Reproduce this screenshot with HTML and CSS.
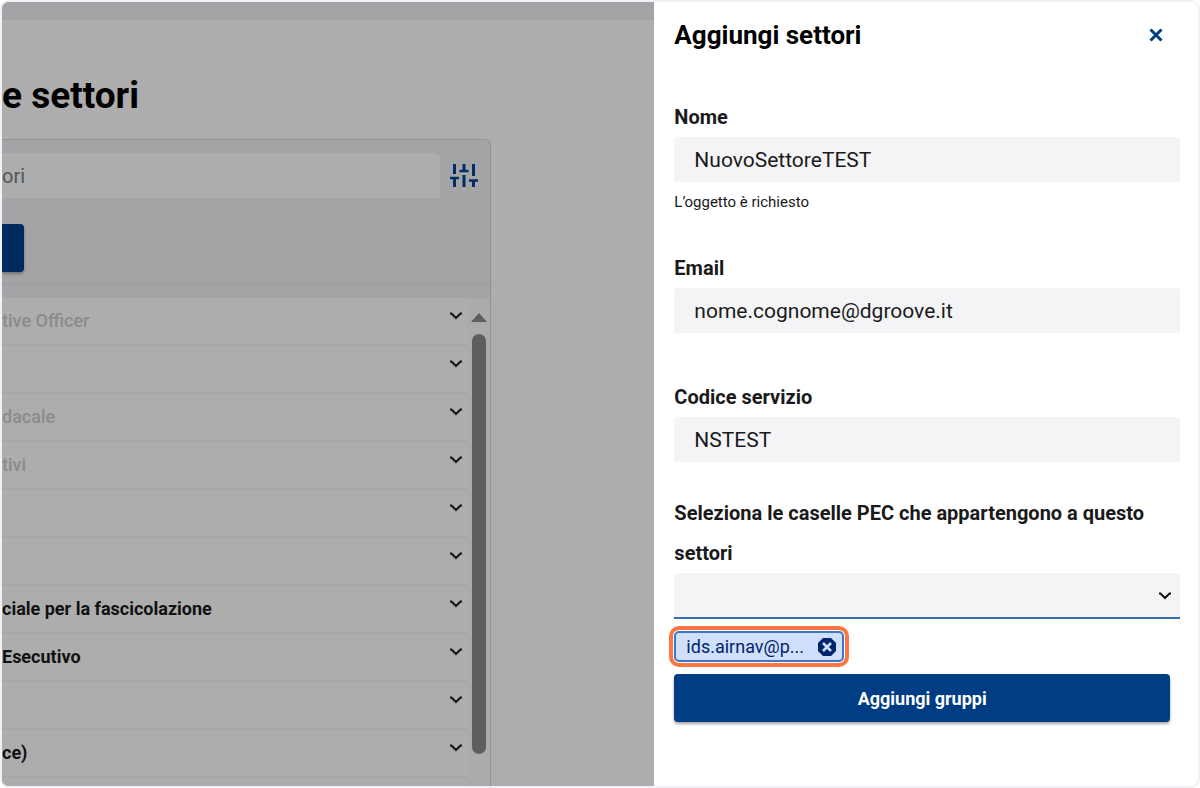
FILE: index.html
```html
<!DOCTYPE html>
<html lang="it">
<head>
  <meta charset="UTF-8" />
  <meta name="viewport" content="width=device-width, initial-scale=1" />
  <title>Gestione settori</title>
  <link rel="stylesheet" href="styles.css">
</head>
<body>

<!-- Shared icons -->
<svg class="icon-defs" aria-hidden="true">
  <symbol id="chevron" viewBox="0 0 14 8">
    <path d="M1 1.500h1.500L7 6l4.500-4.500H13" fill="none" stroke="currentColor" stroke-width="2" />
  </symbol>
</svg>

<div class="frame">
  <main class="page">
    <div class="topbar"></div>
    <h1 class="page-title">e settori</h1>

    <section class="card">
      <div class="card-head">
        <div class="search-row">
          <input class="search" type="text" placeholder="ori" aria-label="Cerca settori" />
          <button class="filter-btn" type="button" aria-label="Filtri">
            <svg width="28" height="24" viewBox="0 0 28 24" fill="none" stroke="currentColor" stroke-width="3">
              <path d="M4.500 0v10M4.500 14v9M14 0v7M14 11v12M23.500 0v12M23.500 17v6" />
              <path d="M0 14h9M9.500 7h9M19 16.500h9" stroke-width="2.500" />
            </svg>
          </button>
        </div>
        <button class="add-btn" type="button" aria-label="Aggiungi"></button>
      </div>

      <div class="list-wrap">
        <ul class="list">
          <li class="row muted"><span>tive Officer</span><svg class="chevron"><use href="#chevron" /></svg></li>
          <li class="row"><span></span><svg class="chevron"><use href="#chevron" /></svg></li>
          <li class="row muted"><span>dacale</span><svg class="chevron"><use href="#chevron" /></svg></li>
          <li class="row muted"><span>tivi</span><svg class="chevron"><use href="#chevron" /></svg></li>
          <li class="row"><span></span><svg class="chevron"><use href="#chevron" /></svg></li>
          <li class="row"><span></span><svg class="chevron"><use href="#chevron" /></svg></li>
          <li class="row"><span>ciale per la fascicolazione</span><svg class="chevron"><use href="#chevron" /></svg></li>
          <li class="row"><span>Esecutivo</span><svg class="chevron"><use href="#chevron" /></svg></li>
          <li class="row"><span></span><svg class="chevron"><use href="#chevron" /></svg></li>
          <li class="row"><span>ce)</span><svg class="chevron"><use href="#chevron" /></svg></li>
        </ul>
        <div class="scrollbar">
          <div class="scroll-arrow"></div>
          <div class="scroll-thumb"></div>
        </div>
      </div>
    </section>
  </main>

  <aside class="drawer">
    <header class="drawer-head">
      <h2 class="drawer-title">Aggiungi settori</h2>
      <button class="close-btn" type="button" aria-label="Chiudi">
        <svg width="14" height="14" viewBox="0 0 14 14" fill="none" stroke="currentColor" stroke-width="3">
          <path d="M1.500 1.500l11 11M12.500 1.500l-11 11" />
        </svg>
      </button>
    </header>

    <form class="form">
      <div class="field field-nome">
        <label for="nome">Nome</label>
        <input id="nome" class="input" type="text" value="NuovoSettoreTEST" />
        <p class="hint">L’oggetto è richiesto</p>
      </div>

      <div class="field field-email">
        <label for="email">Email</label>
        <input id="email" class="input" type="email" value="nome.cognome@dgroove.it" />
      </div>

      <div class="field field-codice">
        <label for="codice">Codice servizio</label>
        <input id="codice" class="input" type="text" value="NSTEST" />
      </div>

      <div class="field field-pec">
        <label for="pec">Seleziona le caselle PEC che appartengono a questo settori</label>
        <div class="select-wrap">
          <select id="pec" class="select"><option></option></select>
          <svg class="chevron"><use href="#chevron" /></svg>
        </div>
      </div>

      <div class="chip">
        <span>ids.airnav@p...</span>
        <button class="chip-remove" type="button" aria-label="Rimuovi">
          <svg width="18" height="18" viewBox="0 0 18 18">
            <path d="M5 0h8l5 5v8l-5 5H5l-5-5V5z" fill="currentColor" />
            <path d="M5 5l8 8M13 5l-8 8" stroke="#cfdffc" stroke-width="2.500" />
          </svg>
        </button>
      </div>

      <button class="submit-btn" type="button">Aggiungi gruppi</button>
    </form>
  </aside>
</div>

</body>
</html>
```
FILE: styles.css
```css
* {
  box-sizing: border-box;
}

body {
  margin: 0;
  font-family: Roboto, "Liberation Sans", sans-serif;
  background-color: #fff;
  color: #1a1a1a;
}

button {
  font-family: inherit;
  border: none;
  padding: 0;
  cursor: pointer;
}

.icon-defs {
  display: none;
}

.frame {
  display: grid;
  grid-template-columns: 6fr 5fr;
  grid-template-rows: minmax(0, 1fr);
  height: 100vh;
  border: 2px solid #f1f1f6;
  border-radius: 9px;
  overflow: hidden;
}

/* Page behind the drawer */
.page {
  min-width: 0;
  display: flex;
  flex-direction: column;
  background-color: #adadad;
}

.topbar {
  flex: none;
  height: 18px;
  background-color: #a4a4a6;
}

.page-title {
  margin: 52px 0 19px;
  font-size: 37px;
  line-height: 48px;
  font-weight: 700;
  color: #000;
}

.card {
  flex: 1;
  min-height: 0;
  width: 75%;
  display: flex;
  flex-direction: column;
  background-color: #a4a4a6;
  border: 1px solid #929295;
  border-width: 1px 1px 0 0;
  border-top-right-radius: 6px;
  overflow: hidden;
}

.card-head {
  padding: 13px 12px 12px 0;
  border-bottom: 1px solid #9c9c9f;
}

.search-row {
  display: flex;
  align-items: center;
  gap: 10px;
}

.search {
  flex: 1;
  min-width: 0;
  height: 45px;
  border: none;
  border-top-right-radius: 6px;
  padding: 0;
  background-color: #adadad;
  font-family: inherit;
  font-size: 20px;
}

.search::placeholder {
  color: #555;
  opacity: 1;
}

.filter-btn {
  display: flex;
  background: none;
  color: #002d66;
}

.add-btn {
  display: block;
  width: 22px;
  height: 48px;
  margin-top: 26px;
  border-radius: 0 4px 4px 0;
  background-color: #002a5f;
  box-shadow: 0 2px 3px rgb(0 0 0 / 0.3);
}

.list-wrap {
  flex: 1;
  min-height: 0;
  display: flex;
  margin-top: 13px;
  background-color: #adadad;
  overflow: hidden;
}

.list {
  flex: 1;
  margin: 0;
  padding: 0;
  list-style: none;
}

.row {
  display: flex;
  justify-content: space-between;
  height: 48px;
  padding-right: 4px;
  border-bottom: 2px solid #a7a7a7;
  font-size: 18px;
  line-height: 46px;
  font-weight: 700;
  color: #111;
}

.row .chevron {
  margin-top: 14px;
}

.muted {
  font-weight: 500;
  color: #8a8c8c;
}

.chevron {
  width: 14px;
  height: 8px;
  color: #111;
}

.scrollbar {
  display: flex;
  flex-direction: column;
  align-items: center;
  width: 23px;
  padding-top: 15px;
  background-color: #ababab;
}

.scroll-arrow {
  border: 8px solid transparent;
  border-top: none;
  border-bottom: 9px solid #5e5e5e;
}

.scroll-thumb {
  width: 14px;
  height: 420px;
  margin-top: 12px;
  border-radius: 7px;
  background-color: #5e5e5e;
}

/* Drawer */
.drawer {
  min-width: 0;
  padding: 0 18px 0 20px;
  background-color: #fff;
}

.drawer-head {
  display: flex;
  align-items: center;
  justify-content: space-between;
  height: 65px;
  padding-right: 17px;
}

.drawer-title {
  margin: 0;
  font-size: 26px;
  font-weight: 700;
  color: #000;
}

.close-btn {
  display: flex;
  background: none;
  color: #003d85;
}

.form {
  margin-top: 30px;
}

.field label {
  display: block;
  font-size: 20px;
  line-height: 40px;
  font-weight: 700;
}

.field-nome {
  margin-bottom: 26px;
}

.field-email {
  margin-bottom: 44px;
}

.field-codice {
  margin-bottom: 31px;
}

.input,
.select {
  display: block;
  width: 100%;
  height: 45px;
  border: none;
  border-radius: 4px 4px 0 0;
  padding: 0 20px;
  background-color: #f4f4f7;
  color: #1a1a1a;
  font-family: inherit;
  font-size: 21px;
}

.hint {
  margin: 0;
  font-size: 15px;
  line-height: 40px;
}

.select-wrap {
  position: relative;
}

.select {
  height: 46px;
  appearance: none;
  border-bottom: 2px solid #376fa8;
}

.select-wrap .chevron {
  position: absolute;
  top: 19px;
  right: 8px;
  pointer-events: none;
}

.chip {
  display: flex;
  align-items: center;
  justify-content: space-between;
  width: 170px;
  height: 31px;
  margin-top: 12px;
  padding: 0 6px 0 10px;
  border: 2px solid #3f78c9;
  border-radius: 5px;
  outline: 4px solid #ff7542;
  outline-offset: 1px;
  background-color: #cfdffc;
  color: #00256b;
  font-size: 18px;
}

.chip-remove {
  display: flex;
  background: none;
  color: #00256b;
}

.submit-btn {
  display: block;
  width: calc(100% - 10px);
  height: 48px;
  margin-top: 12px;
  border-radius: 4px;
  background-color: #003d85;
  box-shadow: 0 2px 3px rgb(0 0 0 / 0.35);
  color: #fff;
  font-size: 18px;
  font-weight: 700;
}
```
